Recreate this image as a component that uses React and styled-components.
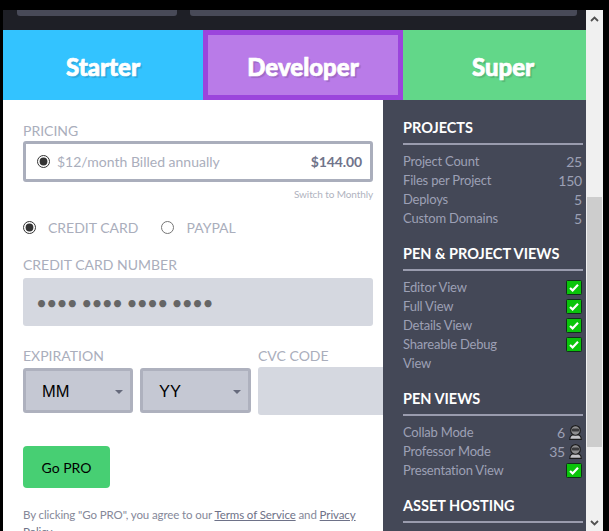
import React from 'react';
import styled, { createGlobalStyle } from 'styled-components';

const GlobalStyle = createGlobalStyle`
  html, body {
    margin: 0;
    padding: 0;
    height: 531px;
    overflow: hidden;
    background: #000;
    font-family: Lato, "Open Sans", sans-serif;
  }
  * { box-sizing: border-box; }
`;

const Frame = styled.div`
  display: flex;
  height: 531px;
  padding: 10px 6px 0 3px;
  overflow: hidden;
`;
const Content = styled.div`
  width: 583px;
  display: flex;
  flex-direction: column;
  overflow: hidden;
`;
const TopStrip = styled.div`
  height: 20px;
  flex: none;
  background: #1e1f26;
  display: flex;
  gap: 13px;
  padding-left: 14px;
`;
const TopBar = styled.div`
  height: 6px;
  flex: none;
  width: ${(p) => p.$width};
  background: #484a58;
  border-radius: 0 0 3px 3px;
`;
const Tabs = styled.div`
  display: grid;
  grid-template-columns: 200px 200px 200px;
  height: 70px;
  flex: none;
`;
const Tab = styled.div`
  display: flex;
  align-items: center;
  justify-content: center;
  padding-top: 2px;
  background: ${(p) => p.$bg};
  border: ${(p) => (p.$active ? '5px solid #9b45dc' : 'none')};
  color: #fff;
  font-size: 24px;
  font-weight: 900;
  -webkit-text-stroke: 0.7px #fff;
  text-shadow: 2px 2px 1px rgba(0, 0, 0, 0.14);
`;
const Body = styled.div`
  display: flex;
  flex: 1;
  min-height: 0;
`;
const Form = styled.div`
  width: 380px;
  flex: none;
  background: #fff;
  padding: 22px 10px 0 20px;
  overflow: hidden;
  position: relative;
  color: #aaaebc;
`;
const Label = styled.div`
  font-size: 14px;
  line-height: 17px;
  color: #aaaebc;
  text-transform: uppercase;
`;
const PriceBox = styled.div`
  width: 350px;
  height: 41px;
  margin-top: 2px;
  border: 3px solid #aaaebc;
  border-radius: 3px;
  display: flex;
  align-items: center;
  padding: 0 8px 0 11px;
  gap: 7px;
  font-size: 14px;
`;
const Radio = styled.input.attrs({ type: 'radio' })`
  width: 13px;
  height: 13px;
  margin: 0;
  accent-color: #333;
  flex: none;
`;
const PriceText = styled.span`
  flex: 1;
`;
const Price = styled.strong`
  color: #70748a;
  font-weight: 700;
  letter-spacing: -0.1px;
`;
const SwitchLink = styled.div`
  width: 350px;
  text-align: right;
  font-size: 10px;
  letter-spacing: -0.1px;
  line-height: 13px;
  margin-top: 6px;
  color: #b0b3c0;
`;
const Methods = styled.div`
  display: flex;
  align-items: center;
  margin-top: 18px;
  height: 17px;
`;
const Method = styled.label`
  display: flex;
  align-items: center;
  gap: 12px;
  margin-right: 23px;
  font-size: 14px;
  color: #aaaebc;
`;
const Field = styled.div`
  margin-top: 20px;
  width: 350px;
`;
const TextInput = styled.input`
  display: block;
  width: ${(p) => p.$width || '100%'};
  height: 48px;
  margin-top: 5px;
  border: none;
  border-radius: 3px;
  background: #d5d8e0;
  padding: 0 13px;
  font-family: Lato, sans-serif;
  font-size: 19px;
  letter-spacing: -0.75px;
  &::placeholder { color: #666; opacity: 1; }
`;
const ExpiryRow = styled.div`
  display: flex;
  margin-top: 21px;
  width: 400px;
`;
const Column = styled.div`
  display: flex;
  flex-direction: column;
`;
const Selects = styled.div`
  display: flex;
  gap: 7px;
  margin-top: 4px;
  margin-right: 7px;
`;
const Select = styled.div`
  width: ${(p) => p.$width};
  height: 45px;
  background: #c5c8d3;
  border: 3px solid #aeb1be;
  border-radius: 3px;
  display: flex;
  align-items: center;
  justify-content: space-between;
  padding: 2px 7px 0 16px;
  font-family: "Liberation Sans", Arial, sans-serif;
  font-size: 16.5px;
  color: #000;
`;
const Caret = styled.span`
  width: 0;
  height: 0;
  border-left: 4px solid transparent;
  border-right: 4px solid transparent;
  border-top: 4px solid #666a7c;
`;
const Cvc = styled(TextInput)`
  margin-top: 3px;
`;
const GoPro = styled.button`
  display: block;
  width: 87px;
  height: 42px;
  margin-top: 31px;
  border: none;
  border-radius: 4px;
  background: #47cf73;
  color: #000;
  font-family: Lato, sans-serif;
  font-size: 14px;
`;
const Terms = styled.p`
  margin: 18px 0 0;
  width: 350px;
  font-size: 11.5px;
  letter-spacing: -0.1px;
  line-height: 17px;
  color: #858899;
  a { color: #6e7288; text-decoration: underline; }
`;
const Side = styled.div`
  flex: 1;
  background: #444857;
  padding: 19px 3px 0 20px;
  overflow: hidden;
`;
const SideTitle = styled.h3`
  margin: ${(p) => (p.$first ? '0' : '17px')} 0 0;
  padding-bottom: 7px;
  border-bottom: 2px solid #9a9cae;
  color: #fff;
  font-size: 14.5px;
  line-height: 17px;
  font-weight: 700;
  text-transform: uppercase;
`;
const Rows = styled.div`
  margin-top: 7px;
`;
const Row = styled.div`
  display: flex;
  justify-content: space-between;
  align-items: flex-start;
  font-size: 13px;
  letter-spacing: -0.2px;
  line-height: 19px;
  color: #9da0b5;
`;
const RowLabel = styled.span`
  max-width: 110px;
`;
const RowValue = styled.span`
  display: flex;
  align-items: center;
  gap: 4px;
  margin-right: 1px;
  font-size: 14px;
  height: 19px;
  svg { flex: none; display: block; }
`;
const ScrollBar = styled.div`
  width: 17px;
  flex: none;
  background: #f0f0f0;
  display: flex;
  flex-direction: column;
  align-items: center;
`;
const ArrowBox = styled.div`
  height: 17px;
  flex: none;
  display: flex;
  align-items: center;
  justify-content: center;
`;
const Thumb = styled.div`
  width: 15px;
  height: 250px;
  flex: none;
  margin-top: 170px;
  margin-bottom: 67px;
  background: #cdcdcd;
`;

function Check() {
  return (
    <svg width="16" height="15" viewBox="0 0 16 15">
      <rect x="0.5" y="0.5" width="15" height="14" rx="1" fill="#0ac40a" stroke="#10301a" />
      <path d="M4 8l2.6 2.4L12 4.8" fill="none" stroke="#fff" strokeWidth="2.2" />
    </svg>
  );
}

function Person() {
  return (
    <svg width="13" height="15" viewBox="0 0 13 15">
      <path d="M0.700 14.400c0-3.400 1.800-4.900 5.800-4.900s5.800 1.500 5.800 4.900z" fill="#c4c4c8" stroke="#1a1a1a" strokeWidth="1.100" />
      <circle cx="6.500" cy="5.400" r="4.800" fill="#8e8e90" stroke="#1a1a1a" strokeWidth="1.100" />
      <rect x="2.700" y="3.500" width="7.600" height="3" rx="1.500" fill="#3a3a3c" />
    </svg>
  );
}

function Arrow({ d }) {
  return (
    <svg width="9" height="6" viewBox="0 0 9 6">
      <path d={d} fill="none" stroke="#505050" strokeWidth="1.800" />
    </svg>
  );
}

const sections = [
  {
    title: 'Projects',
    rows: [
      ['Project Count', '25'],
      ['Files per Project', '150'],
      ['Deploys', '5'],
      ['Custom Domains', '5'],
    ],
  },
  {
    title: 'Pen & Project Views',
    rows: [
      ['Editor View', 'check'],
      ['Full View', 'check'],
      ['Details View', 'check'],
      ['Shareable Debug View', 'check'],
    ],
  },
  {
    title: 'Pen Views',
    rows: [
      ['Collab Mode', '6', true],
      ['Professor Mode', '35', true],
      ['Presentation View', 'check'],
    ],
  },
  { title: 'Asset Hosting', rows: [] },
];

export default function App() {
  return (
    <>
      <GlobalStyle />
      <Frame>
        <Content>
          <TopStrip>
            <TopBar $width="160px" />
            <TopBar $width="387px" />
          </TopStrip>
          <Tabs>
            <Tab $bg="#33c3ff">Starter</Tab>
            <Tab $bg="#b97be8" $active>Developer</Tab>
            <Tab $bg="#62d789">Super</Tab>
          </Tabs>
          <Body>
            <Form>
              <Label>Pricing</Label>
              <PriceBox>
                <Radio defaultChecked name="price" />
                <PriceText>$12/month Billed annually</PriceText>
                <Price>$144.00</Price>
              </PriceBox>
              <SwitchLink>Switch to Monthly</SwitchLink>
              <Methods>
                <Method><Radio defaultChecked name="method" />CREDIT CARD</Method>
                <Method><Radio name="method" />PAYPAL</Method>
              </Methods>
              <Field>
                <Label>Credit Card Number</Label>
                <TextInput placeholder="•••• •••• •••• ••••" />
              </Field>
              <ExpiryRow>
                <Column>
                  <Label>Expiration</Label>
                  <Selects>
                    <Select $width="110px">MM<Caret /></Select>
                    <Select $width="111px">YY<Caret /></Select>
                  </Selects>
                </Column>
                <Column>
                  <Label>CVC Code</Label>
                  <Cvc $width="135px" />
                </Column>
              </ExpiryRow>
              <GoPro>Go PRO</GoPro>
              <Terms>
                By clicking "Go PRO", you agree to our <a href="#terms">Terms of Service</a> and <a href="#privacy">Privacy Policy</a>.
              </Terms>
            </Form>
            <Side>
              {sections.map((section, i) => (
                <div key={section.title}>
                  <SideTitle $first={i === 0}>{section.title}</SideTitle>
                  <Rows>
                    {section.rows.map(([label, value, person]) => (
                      <Row key={label}>
                        <RowLabel>{label}</RowLabel>
                        <RowValue>
                          {value === 'check' ? <Check /> : value}
                          {person && <Person />}
                        </RowValue>
                      </Row>
                    ))}
                  </Rows>
                </div>
              ))}
            </Side>
          </Body>
        </Content>
        <ScrollBar>
          <ArrowBox><Arrow d="M1 5l3.500-3.500L8 5" /></ArrowBox>
          <Thumb />
          <ArrowBox><Arrow d="M1 1l3.500 3.500L8 1" /></ArrowBox>
        </ScrollBar>
      </Frame>
    </>
  );
}
